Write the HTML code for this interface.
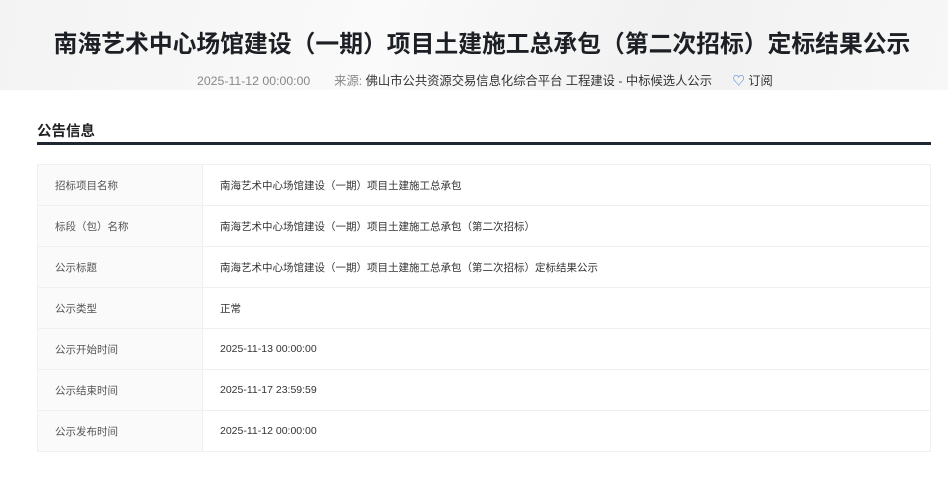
<!DOCTYPE html>
<html><head><meta charset="utf-8"><style>
body{margin:0;width:948px;height:480px;overflow:hidden;background:#fff;font-family:"Liberation Sans","Noto Sans CJK SC",sans-serif;}
.hd{position:absolute;left:0;top:0;width:948px;height:90px;background:linear-gradient(100deg,#f3f3f3,#fafafa 40%,#f1f1f1 70%,#f7f7f7);}
.t{position:absolute;left:8px;width:948px;top:24px;text-align:center;font-size:23.8px;font-weight:bold;color:#1c1f24;white-space:nowrap;}
.m{position:absolute;left:197px;top:71px;font-size:12.3px;color:#888;white-space:nowrap;}
.m b{font-weight:normal;color:#333}
.h{position:absolute;left:37px;top:120px;font-size:14.5px;font-weight:bold;color:#222;}
.line{position:absolute;left:37px;top:142px;width:894px;height:3px;background:#1f2731;}
table{position:absolute;left:37px;top:164px;width:894px;border-collapse:collapse;font-size:10.5px;}
td{height:40px;border:1px solid #f0f0f0;padding:0 0 0 17px;color:#333;}
td.l{width:147px;background:#fafafa;color:#555;}
</style></head><body>
<div class="hd"></div>
<div class="t">南海艺术中心场馆建设（一期）项目土建施工总承包（第二次招标）定标结果公示</div>
<div class="m">2025-11-12 00:00:00 &nbsp;&nbsp;&nbsp;&nbsp;&nbsp; 来源: <b>佛山市公共资源交易信息化综合平台 工程建设 - 中标候选人公示</b> &nbsp;&nbsp;&nbsp;&nbsp;&nbsp;<span style="color:#3a7bd5">♡</span> <b>订阅</b></div>
<div class="h">公告信息</div>
<div class="line"></div>
<table>
<tr><td class="l">招标项目名称</td><td>南海艺术中心场馆建设（一期）项目土建施工总承包</td></tr>
<tr><td class="l">标段（包）名称</td><td>南海艺术中心场馆建设（一期）项目土建施工总承包（第二次招标）</td></tr>
<tr><td class="l">公示标题</td><td>南海艺术中心场馆建设（一期）项目土建施工总承包（第二次招标）定标结果公示</td></tr>
<tr><td class="l">公示类型</td><td>正常</td></tr>
<tr><td class="l">公示开始时间</td><td>2025-11-13 00:00:00</td></tr>
<tr><td class="l">公示结束时间</td><td>2025-11-17 23:59:59</td></tr>
<tr><td class="l">公示发布时间</td><td>2025-11-12 00:00:00</td></tr>
</table>
</body></html>
